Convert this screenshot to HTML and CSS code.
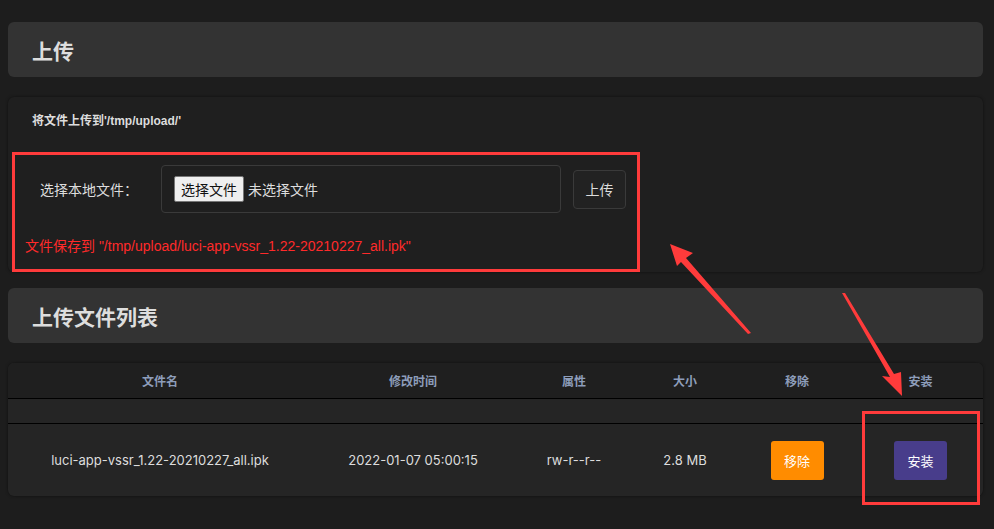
FILE: index.html
```html
<!DOCTYPE html>
<html>
<head>
  <title>上传</title>
  <link rel="stylesheet" href="styles.css">
</head>
<body>
  <div class="page">
    <div class="cbi-title"><h2>上传</h2></div>

    <div class="cbi-section upload-form">
      <p class="upload-hint">将文件上传到'/tmp/upload/'</p>
      <div class="upload-row">
        <label class="upload-label">选择本地文件：</label>
        <div class="file-box">
          <span class="file-btn">选择文件</span>
          <span class="file-none">未选择文件</span>
        </div>
        <button class="btn-plain">上传</button>
      </div>
      <p class="upload-msg">文件保存到 "/tmp/upload/luci-app-vssr_1.22-20210227_all.ipk"</p>
    </div>

    <div class="cbi-title"><h2>上传文件列表</h2></div>

    <div class="cbi-section file-list">
      <table>
        <colgroup>
          <col style="width:304px">
          <col style="width:202px">
          <col style="width:120px">
          <col style="width:102px">
          <col style="width:122px">
          <col>
        </colgroup>
        <thead>
          <tr><th>文件名</th><th>修改时间</th><th>属性</th><th>大小</th><th>移除</th><th>安装</th></tr>
        </thead>
        <tbody>
          <tr class="spacer"><td colspan="6"></td></tr>
          <tr>
            <td>luci-app-vssr_1.22-20210227_all.ipk</td>
            <td>2022-01-07 05:00:15</td>
            <td>rw-r--r--</td>
            <td>2.8 MB</td>
            <td><button class="btn-remove">移除</button></td>
            <td><button class="btn-install">安装</button></td>
          </tr>
        </tbody>
      </table>
    </div>

    <!-- annotation marks -->
    <div class="mark mark-form"></div>
    <div class="mark mark-install"></div>
    <svg class="arrows" width="994" height="529" viewBox="0 0 994 529">
      <polygon points="670,244 693,253 686,258 751,333 748,334 681,262 677,266" fill="#ff3b3b"/>
      <polygon points="842,293 845,293 894,374 901,372 902,396 882,376 890,377" fill="#ff3b3b"/>
    </svg>
  </div>
</body>
</html>
```

FILE: styles.css
```css
body {
  margin: 0;
  background: #1d1d1d;
  font-family: "Liberation Sans", "Noto Sans CJK SC", sans-serif;
  color: #ddd;
}
.page {
  position: relative;
  min-height: 100vh;
  box-sizing: border-box;
  padding: 22px 11px 0 8px;
  display: flex;
  flex-direction: column;
}
.cbi-title {
  background: #333;
  border-radius: 6px;
  height: 55px;
  display: flex;
  align-items: center;
  padding-left: 24px;
  margin-bottom: 20px;
}
.cbi-title h2 {
  margin: 0;
  font-size: 21px;
  font-weight: bold;
  color: #ddd;
}
.cbi-section {
  background: #1f1f1f;
  border-radius: 6px;
  box-shadow: 0 0 3px rgba(0, 0, 0, 0.5);
}
.upload-form {
  height: 175px;
  margin-bottom: 16px;
  padding: 14px 0 0 0;
  box-sizing: border-box;
}
.upload-hint {
  margin: 0 0 0 24px;
  font-size: 12px;
  font-weight: bold;
  color: #ddd;
}
.upload-row {
  display: flex;
  align-items: center;
  margin-top: 37px;
  padding-left: 32px;
}
.upload-label {
  width: 121px;
  font-size: 14px;
  color: #ddd;
}
.file-box {
  width: 400px;
  height: 48px;
  box-sizing: border-box;
  border: 1px solid #3a3a3a;
  border-radius: 4px;
  display: flex;
  align-items: center;
  padding-left: 12px;
  gap: 4px;
  font-size: 14px;
}
.file-btn {
  background: #efefef;
  color: #111;
  border: 1px solid #767676;
  border-radius: 2px;
  padding: 2px 6px;
  font-size: 14px;
}
.file-none {
  color: #ddd;
}
.btn-plain {
  margin-left: 12px;
  width: 53px;
  height: 39px;
  background: #222;
  color: #ddd;
  border: 1px solid #3a3a3a;
  border-radius: 4px;
  font-family: inherit;
  font-size: 14px;
}
.upload-msg {
  margin: 22px 0 0 17px;
  font-size: 14px;
  color: #ff2a2a;
}
.file-list {
  overflow: hidden;
  background: #252525;
}
table {
  width: 100%;
  border-collapse: collapse;
  table-layout: fixed;
}
th {
  height: 35px;
  padding: 0;
  background: #1f1f1f;
  color: #8d9dba;
  font-size: 12px;
  font-weight: bold;
  border-bottom: 1px solid #000;
}
.spacer td {
  height: 24px;
  border-bottom: 1px solid #000;
  padding: 0;
}
td {
  height: 72px;
  padding: 0;
  text-align: center;
  font-family: Inter, "Noto Sans CJK SC", sans-serif;
  font-size: 13px;
  color: #ddd;
}
.btn-remove,
.btn-install {
  width: 53px;
  height: 39px;
  border: none;
  border-radius: 3px;
  color: #fff;
  font-family: "Liberation Sans", "Noto Sans CJK SC", sans-serif;
  font-size: 13px;
}
.btn-remove {
  background: #ff8c00;
}
.btn-install {
  background: #483d8b;
}
.mark {
  position: absolute;
  border: 3px solid #ff3b3b;
  box-sizing: border-box;
}
.mark-form {
  left: 12px;
  top: 152px;
  width: 628px;
  height: 120px;
}
.mark-install {
  left: 862px;
  top: 411px;
  width: 118px;
  height: 94px;
}
.arrows {
  position: absolute;
  left: 0;
  top: 0;
}
```
